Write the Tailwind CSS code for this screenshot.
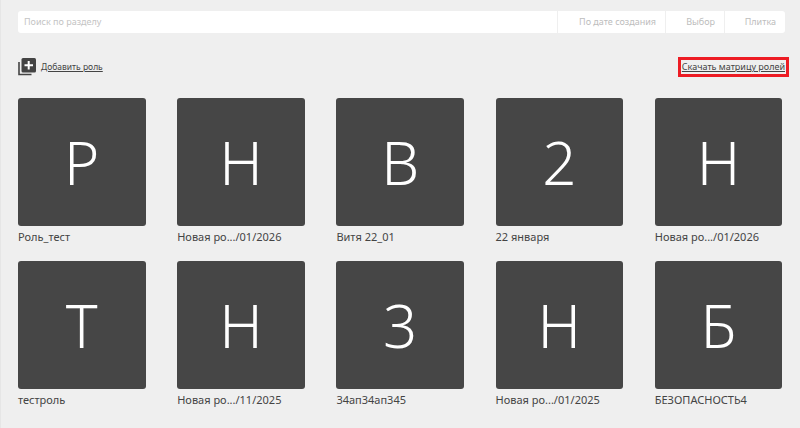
<!DOCTYPE html>
<html lang="ru">
<head>
<meta charset="UTF-8">
<title>Роли</title>
<script src="https://cdn.jsdelivr.net/npm/@tailwindcss/browser@4"></script>
</head>
<body class="bg-[#efefef] h-[428px] w-[800px] overflow-hidden font-['Noto_Sans',sans-serif]">
<div class="h-full border-l border-[#e6e6e6] pl-[17px] pr-[15px] pt-[11px]">
    <!-- search bar -->
    <div class="flex h-[22px] bg-white rounded-[3px] text-[9px] leading-[22px] text-[#bdbdbd]">
        <div class="flex-1 pl-[6px] text-[#c4c4c4]">Поиск по разделу</div>
        <div class="w-[108px] border-l border-[#efefef] text-right pr-[9px]">По дате создания</div>
        <div class="w-[59px] border-l border-[#efefef] text-right pr-[9px]">Выбор</div>
        <div class="w-[61px] border-l border-[#efefef] text-right pr-[9px]">Плитка</div>
    </div>

    <!-- actions -->
    <div class="flex justify-between items-center mt-[24px] h-[20px]">
        <a class="flex items-center gap-[5px] text-[8.5px] text-[#444] underline">
            <svg width="18" height="18" viewBox="0 0 18 18">
                <path d="M1 4v12.5h12.5" fill="none" stroke="#444" stroke-width="1.6"/>
                <rect x="3.5" y="0" width="14.5" height="14.5" rx="1.5" fill="#444"/>
                <path d="M10.7 3v8.5M6.5 7.25h8.5" stroke="#fff" stroke-width="2"/>
            </svg>
            Добавить роль
        </a>
        <a class="border-[3px] border-[#ed1c24] px-[1px] h-[20px] leading-[13px] text-[9px] text-[#444] underline mr-[-4px]">Скачать матрицу ролей</a>
    </div>

    <!-- roles -->
    <div class="grid grid-cols-[repeat(5,127.5px)] gap-x-[31.7px] mt-[21px]">
        <div class="h-[163px]"><div class="flex items-center justify-center h-[127.5px] bg-[#464646] rounded-[3px] text-white text-[60px] font-light">Р</div><div class="mt-[3px] text-[11px] text-[#444]">Роль_тест</div></div>
        <div class="h-[163px]"><div class="flex items-center justify-center h-[127.5px] bg-[#464646] rounded-[3px] text-white text-[60px] font-light">Н</div><div class="mt-[3px] text-[11px] text-[#444]">Новая ро.../01/2026</div></div>
        <div class="h-[163px]"><div class="flex items-center justify-center h-[127.5px] bg-[#464646] rounded-[3px] text-white text-[60px] font-light">В</div><div class="mt-[3px] text-[11px] text-[#444]">Витя 22_01</div></div>
        <div class="h-[163px]"><div class="flex items-center justify-center h-[127.5px] bg-[#464646] rounded-[3px] text-white text-[60px] font-light">2</div><div class="mt-[3px] text-[11px] text-[#444]">22 января</div></div>
        <div class="h-[163px]"><div class="flex items-center justify-center h-[127.5px] bg-[#464646] rounded-[3px] text-white text-[60px] font-light">Н</div><div class="mt-[3px] text-[11px] text-[#444]">Новая ро.../01/2026</div></div>
        <div class="h-[163px]"><div class="flex items-center justify-center h-[127.5px] bg-[#464646] rounded-[3px] text-white text-[60px] font-light">Т</div><div class="mt-[3px] text-[11px] text-[#444]">тестроль</div></div>
        <div class="h-[163px]"><div class="flex items-center justify-center h-[127.5px] bg-[#464646] rounded-[3px] text-white text-[60px] font-light">Н</div><div class="mt-[3px] text-[11px] text-[#444]">Новая ро.../11/2025</div></div>
        <div class="h-[163px]"><div class="flex items-center justify-center h-[127.5px] bg-[#464646] rounded-[3px] text-white text-[60px] font-light">3</div><div class="mt-[3px] text-[11px] text-[#444]">34ап34ап345</div></div>
        <div class="h-[163px]"><div class="flex items-center justify-center h-[127.5px] bg-[#464646] rounded-[3px] text-white text-[60px] font-light">Н</div><div class="mt-[3px] text-[11px] text-[#444]">Новая ро.../01/2025</div></div>
        <div class="h-[163px]"><div class="flex items-center justify-center h-[127.5px] bg-[#464646] rounded-[3px] text-white text-[60px] font-light">Б</div><div class="mt-[3px] text-[11px] text-[#444]">БЕЗОПАСНОСТЬ4</div></div>
    </div>
</div>
</body>
</html>
